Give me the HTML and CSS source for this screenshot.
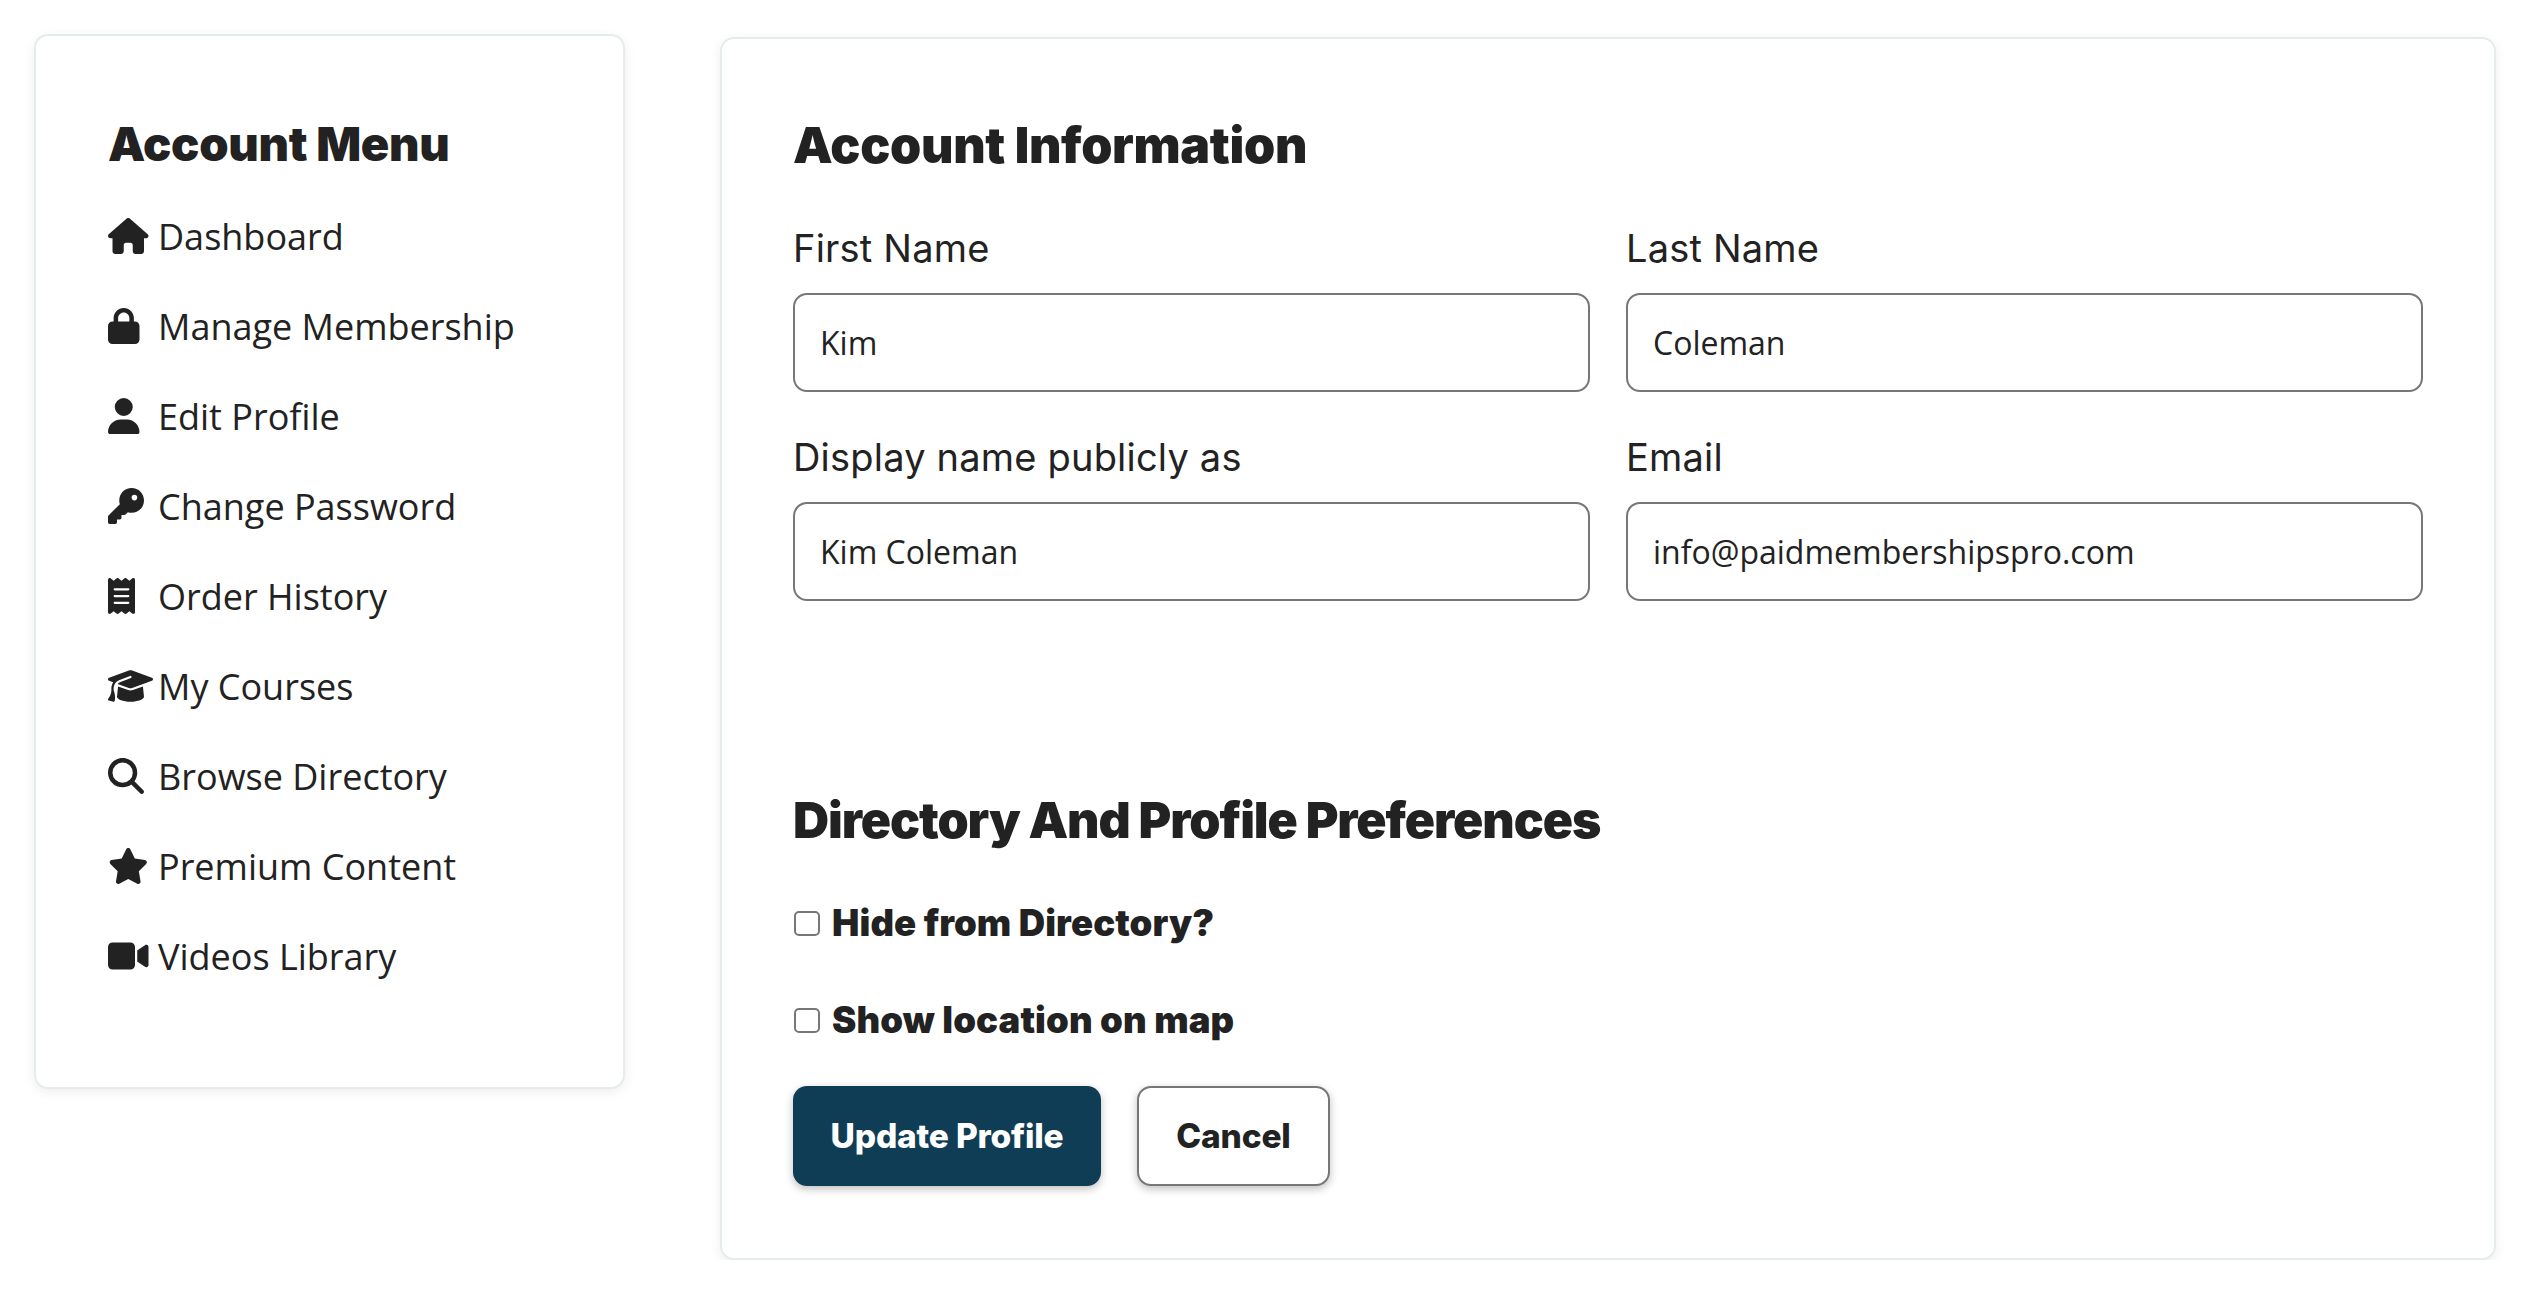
FILE: index.html
```html
<!DOCTYPE html>
<html lang="en">
<head>
<meta charset="utf-8">
<title>Account</title>
<link rel="stylesheet" href="styles.css">
</head>
<body>
<div class="page">
  <aside class="card side">
    <h3 class="side-title">Account Menu</h3>
    <ul class="menu">
      <li><a class="item"><span class="slot"><svg class="ic" viewBox="0 0 576 512"><path d="M575.8 255.5c0 18-15 32.1-32 32.1h-32l.7 160.2c0 2.7-.2 5.4-.5 8.1V472c0 22.1-17.9 40-40 40H456c-1.1 0-2.2 0-3.3-.1c-1.4 .1-2.8 .1-4.2 .1H416 392c-22.1 0-40-17.9-40-40V448 384c0-17.7-14.3-32-32-32H256c-17.7 0-32 14.3-32 32v64 24c0 22.1-17.9 40-40 40H160 128.1c-1.5 0-3-.1-4.5-.2c-1.2 .1-2.4 .2-3.6 .2H104c-22.1 0-40-17.9-40-40V360c0-.9 0-1.9 .1-2.8V287.6H32c-18 0-32-14-32-32.1c0-9 3-17 10-24L266.4 8c7-7 15-8 22-8s15 2 21 7L564.8 231.5c8 7 12 15 11 24z"/></svg></span>Dashboard</a></li>
      <li><a class="item"><span class="slot"><svg class="ic" viewBox="0 0 448 512"><path d="M144 144v48H304V144c0-44.2-35.8-80-80-80s-80 35.8-80 80zM80 192V144C80 64.5 144.5 0 224 0s144 64.5 144 144v48h16c35.3 0 64 28.7 64 64V448c0 35.3-28.7 64-64 64H64c-35.3 0-64-28.7-64-64V256c0-35.3 28.7-64 64-64H80z"/></svg></span>Manage Membership</a></li>
      <li><a class="item"><span class="slot"><svg class="ic" viewBox="0 0 448 512"><path d="M224 256A128 128 0 1 0 224 0a128 128 0 1 0 0 256zm-45.7 48C79.8 304 0 383.8 0 482.3C0 498.7 13.3 512 29.7 512H418.3c16.4 0 29.7-13.3 29.7-29.7C448 383.8 368.2 304 269.7 304H178.3z"/></svg></span>Edit Profile</a></li>
      <li><a class="item"><span class="slot"><svg class="ic" viewBox="0 0 512 512"><path d="M336 352c97.2 0 176-78.8 176-176S433.2 0 336 0S160 78.8 160 176c0 18.7 2.9 36.8 8.3 53.7L7 391c-4.5 4.5-7 10.6-7 17v80c0 13.3 10.7 24 24 24h80c13.3 0 24-10.7 24-24V448h40c13.3 0 24-10.7 24-24V384h40c6.4 0 12.5-2.5 17-7l33.3-33.3c16.9 5.4 35 8.3 53.7 8.3zM376 96a40 40 0 1 1 0 80 40 40 0 1 1 0-80z"/></svg></span>Change Password</a></li>
      <li><a class="item"><span class="slot"><svg class="ic" viewBox="0 0 384 512"><path d="M14 2.2C22.5-1.7 32.5-.3 39.6 5.8L80 40.4 120.4 5.8c9-7.7 22.3-7.7 31.2 0L192 40.4 232.4 5.8c9-7.7 22.3-7.7 31.2 0L304 40.4 344.4 5.8c7.1-6.1 17.1-7.5 25.6-3.6s14 12.4 14 21.8V488c0 9.4-5.5 17.9-14 21.8s-18.5 2.5-25.6-3.6L304 471.6l-40.4 34.6c-9 7.7-22.3 7.7-31.2 0L192 471.6l-40.4 34.6c-9 7.7-22.3 7.7-31.2 0L80 471.6 39.6 506.2c-7.1 6.1-17.1 7.5-25.6 3.6S0 497.4 0 488V24C0 14.6 5.5 6.1 14 2.2zM96 144c-8.8 0-16 7.2-16 16s7.2 16 16 16H288c8.8 0 16-7.2 16-16s-7.2-16-16-16H96zM80 352c0 8.8 7.2 16 16 16H288c8.8 0 16-7.2 16-16s-7.2-16-16-16H96c-8.8 0-16 7.2-16 16zM96 240c-8.8 0-16 7.2-16 16s7.2 16 16 16H288c8.8 0 16-7.2 16-16s-7.2-16-16-16H96z"/></svg></span>Order History</a></li>
      <li><a class="item"><span class="slot"><svg class="ic" viewBox="0 0 640 512"><path d="M320 32c-8.1 0-16.1 1.4-23.7 4.1L15.8 137.4C6.3 140.9 0 149.9 0 160s6.3 19.1 15.8 22.6l57.9 20.9C57.3 229.3 48 259.8 48 291.9v28.1c0 28.4-10.8 57.7-22.3 80.8c-6.5 13-13.9 25.8-22.5 37.6C0 442.7-.9 448.3 .9 453.4s6 8.9 11.2 10.2l64 16c4.2 1.1 8.7 .3 12.4-2s6.3-6.1 7.1-10.4c8.6-42.8 4.3-81.2-2.1-108.7C90.3 344.3 86 329.8 80 316.5V291.9c0-30.2 10.2-58.7 27.9-81.5c12.9-15.5 29.6-28 49.2-35.7l157-61.7c8.2-3.2 17.5 .8 20.7 9s-.8 17.5-9 20.7l-157 61.7c-12.4 4.9-23.3 12.4-32.2 21.6l159.6 57.6c7.6 2.7 15.6 4.1 23.7 4.1s16.1-1.4 23.7-4.1L624.2 182.6c9.5-3.4 15.8-12.5 15.8-22.6s-6.3-19.1-15.8-22.6L343.7 36.1C336.1 33.4 328.1 32 320 32zM128 408c0 35.3 86 72 192 72s192-36.7 192-72L496.7 262.6 354.5 314c-11.1 4-22.8 6-34.5 6s-23.5-2-34.5-6L143.3 262.6 128 408z"/></svg></span>My Courses</a></li>
      <li><a class="item"><span class="slot"><svg class="ic" viewBox="0 0 512 512"><path d="M416 208c0 45.9-14.9 88.3-40 122.7L502.6 457.4c12.5 12.5 12.5 32.8 0 45.3s-32.8 12.5-45.3 0L330.7 376c-34.4 25.2-76.8 40-122.7 40C93.1 416 0 322.9 0 208S93.1 0 208 0S416 93.1 416 208zM208 352a144 144 0 1 0 0-288 144 144 0 1 0 0 288z"/></svg></span>Browse Directory</a></li>
      <li><a class="item"><span class="slot"><svg class="ic" viewBox="0 0 576 512"><path d="M316.9 18C311.6 7 300.4 0 288.1 0s-23.4 7-28.8 18L195 150.3 51.4 171.5c-12 1.8-22 10.2-25.7 21.7s-.7 24.2 7.9 32.7L137.8 329 113.2 474.7c-2 12 3 24.2 12.9 31.3s23 8 33.8 2.3l128.3-68.5 128.3 68.5c10.8 5.7 23.9 4.9 33.8-2.3s14.9-19.3 12.9-31.3L438.5 329 542.7 225.9c8.6-8.5 11.7-21.2 7.9-32.7s-13.7-19.9-25.7-21.7L381.2 150.3 316.9 18z"/></svg></span>Premium Content</a></li>
      <li><a class="item"><span class="slot"><svg class="ic" viewBox="0 0 576 512"><path d="M0 128C0 92.7 28.7 64 64 64H320c35.3 0 64 28.7 64 64V384c0 35.3-28.7 64-64 64H64c-35.3 0-64-28.7-64-64V128zM559.1 99.8c10.4 5.6 16.9 16.4 16.9 28.2V384c0 11.8-6.5 22.6-16.9 28.2s-23 5-32.9-1.6l-96-64L416 337.1V320 192 174.9l14.2-9.5 96-64c9.8-6.5 22.4-7.2 32.9-1.6z"/></svg></span>Videos Library</a></li>
    </ul>
  </aside>
  <main class="card content">
    <form class="form">
      <h2 class="title">Account Information</h2>
      <div class="fields">
        <div class="field"><label class="label">First Name</label><input class="input" type="text" value="Kim"></div>
        <div class="field"><label class="label">Last Name</label><input class="input" type="text" value="Coleman"></div>
        <div class="field"><label class="label">Display name publicly as</label><input class="input" type="text" value="Kim Coleman"></div>
        <div class="field"><label class="label">Email</label><input class="input" type="text" value="info@paidmembershipspro.com"></div>
      </div>
      <h2 class="title title-second">Directory And Profile Preferences</h2>
      <label class="check"><input class="box" type="checkbox">Hide from Directory?</label>
      <label class="check"><input class="box" type="checkbox">Show location on map</label>
      <div class="actions">
        <button class="btn btn-primary" type="button">Update Profile</button>
        <button class="btn btn-cancel" type="button">Cancel</button>
      </div>
    </form>
  </main>
</div>
</body>
</html>
```
FILE: styles.css
```css
* { box-sizing: border-box; }
html, body { margin: 0; padding: 0; background: #fff; }
body { font-family: "Open Sans", sans-serif; color: #222; }
.page { display: flex; align-items: flex-start; padding: 34px 34px 0 34px; gap: 95px; width: 2528px; }
.card { background: #fff; border: 2px solid #e6ecec; border-radius: 14px; box-shadow: 0 3px 12px rgba(0,0,0,.07); }
.side { width: 591px; height: 1055px; flex: none; padding: 78px 0 0 72px; }
.content { flex: 1; height: 1223px; margin-top: 3px; padding: 74px 71px 0 71px; }
.side-title { margin: 0 0 17px; font: 900 47px/60px Inter, sans-serif; letter-spacing: -.3px; color: #222; }
.menu { list-style: none; margin: 0; padding: 0; }
.item { display: flex; align-items: center; height: 90px; font-size: 36px; color: #222; }
.slot { width: 50px; height: 36px; flex: none; display: block; }
.ic { display: block; height: 36px; width: auto; fill: #222; }
.title { margin: 0; font: 900 50px/64px Inter, sans-serif; letter-spacing: -.3px; color: #222; }
.fields { display: grid; grid-template-columns: 797px 797px; column-gap: 36px; row-gap: 41px; margin-top: 47px; }
.field { display: flex; flex-direction: column; }
.label { font: 400 38px/48px Inter, sans-serif; letter-spacing: .2px; margin-bottom: 21px; color: #222; }
.input { height: 99px; padding: 0 25px; border: 2px solid #777; border-radius: 14px; background: #fff; font: 400 32px "Open Sans", sans-serif; color: #222; outline: none; }
.title-second { margin-top: 187px; letter-spacing: -1.1px; }
.check { display: flex; align-items: center; height: 60px; margin-top: 37px; font: 900 36.5px/60px Inter, sans-serif; letter-spacing: .1px; color: #222; }
.title-second + .check { margin-top: 41px; }
.box { appearance: none; width: 26px; height: 25px; margin: 0 12px 0 1px; border: 2px solid #777; border-radius: 5px; background: #fff; flex: none; }
.actions { display: flex; gap: 36px; margin-top: 36px; }
.btn { height: 100px; border-radius: 14px; font: 800 33.5px Inter, sans-serif; letter-spacing: -.2px; cursor: pointer; box-shadow: 0 3px 8px rgba(0,0,0,.25); }
.btn-primary { width: 308px; background: #0f3d55; border: none; color: #fff; }
.btn-cancel { width: 193px; background: #fff; border: 2px solid #777; color: #222; }
```
